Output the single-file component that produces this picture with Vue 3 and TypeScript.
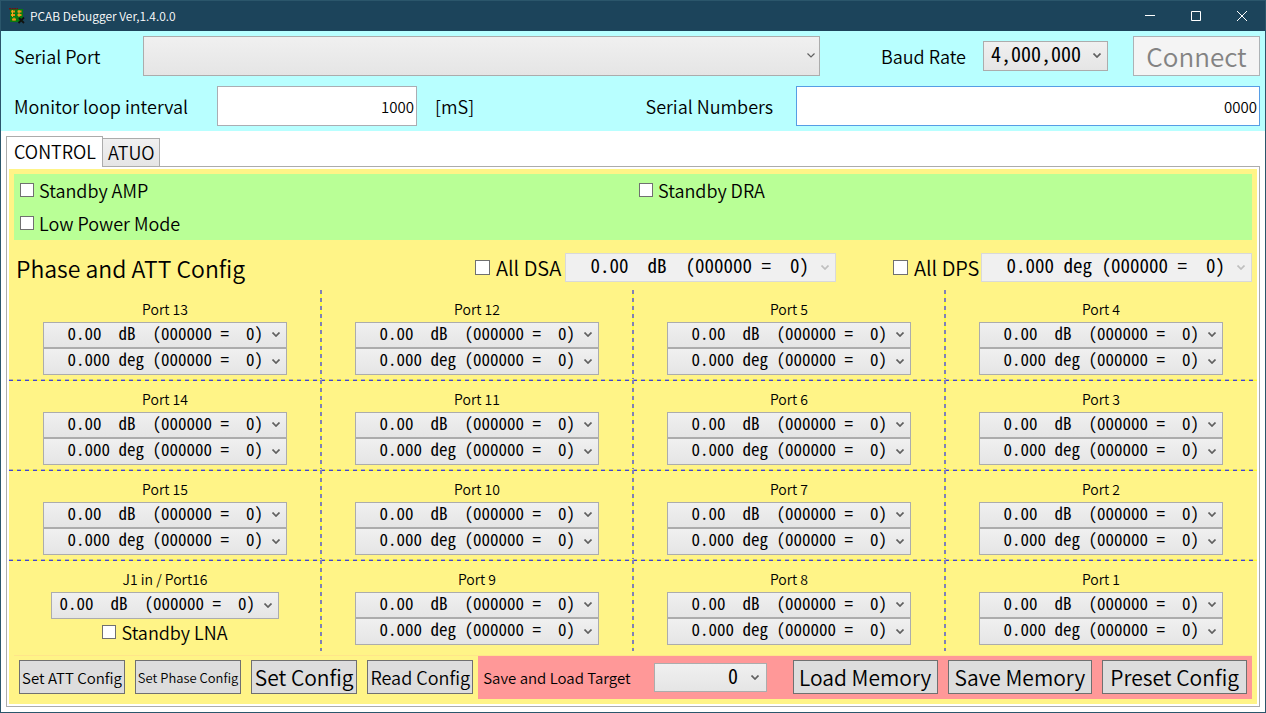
<script setup lang="ts">
import { computed, reactive, ref } from 'vue'

interface Port {
  name: string
  lna?: boolean
}

const nb = (s: string): string => s.replace(/ /g, '\u00a0')
const dsa = nb('0.00  dB  (000000 =  0)')
const dps = nb('0.000 deg (000000 =  0)')

const ports: Port[] = [
  { name: 'Port 13' }, { name: 'Port 12' }, { name: 'Port 5' }, { name: 'Port 4' },
  { name: 'Port 14' }, { name: 'Port 11' }, { name: 'Port 6' }, { name: 'Port 3' },
  { name: 'Port 15' }, { name: 'Port 10' }, { name: 'Port 7' }, { name: 'Port 2' },
  { name: 'J1 in / Port16', lna: true }, { name: 'Port 9' }, { name: 'Port 8' }, { name: 'Port 1' },
]

const interval = ref('1000')
const serials = ref('0000')
const serialPort = ref('')
const tab = ref<'control' | 'auto'>('control')
const all = reactive({ dsa: false, dps: false })
const canConnect = computed(() => serialPort.value !== '')
</script>

<template>
  <div class="window">
    <header class="titlebar">
      <svg class="logo" viewBox="0 0 16 16" aria-hidden="true">
        <rect x="1" y="1" width="13" height="13" fill="#087a10" />
        <path d="M0 .8h9" stroke="#6b1414" stroke-width="1.6" stroke-dasharray="2 .6" />
        <path d="M2 3.5h4M8.500 3.500h4M2 7h4M8.500 7h4M3 11.500h4" stroke="#f08a10" stroke-width="2.200" />
        <path d="M3.500 2v7M10 2v7M5 9.500v3" stroke="#e8b020" stroke-width="1" />
        <path d="M10 10l5 5M15 9.500L9.500 15" stroke="#101010" stroke-width="1.800" />
      </svg>
      <h1>PCAB Debugger Ver,1.4.0.0</h1>
      <div class="winbtns">
        <button type="button" aria-label="Minimize"><svg viewBox="0 0 10 10"><path d="M0 4.500h10" /></svg></button>
        <button type="button" aria-label="Maximize"><svg viewBox="0 0 10 10"><path d="M.5 .5h9v9h-9z" /></svg></button>
        <button type="button" aria-label="Close"><svg viewBox="0 0 10 10"><path d="M0 0l10 10M10 0L0 10" /></svg></button>
      </div>
    </header>

    <section class="connection">
      <div class="row first">
        <label for="port">Serial Port</label>
        <span class="combo tall grow">
          <select id="port" v-model="serialPort"><option value=""></option></select>
          <svg viewBox="0 0 8 5"><path d="M.5 .5L4 4L7.500 .5" /></svg>
        </span>
        <label for="baud" class="baud-label">Baud Rate</label>
        <span class="combo baud">
          <select id="baud"><option>4,000,000</option></select>
          <svg viewBox="0 0 8 5"><path d="M.5 .5L4 4L7.500 .5" /></svg>
        </span>
        <button type="button" class="connect" :disabled="!canConnect">Connect</button>
      </div>
      <div class="row second">
        <div class="half">
          <label for="interval">Monitor loop interval</label>
          <input id="interval" v-model="interval" class="interval" type="text" />
          <span>[mS]</span>
        </div>
        <div class="half">
          <label for="serials">Serial Numbers</label>
          <input id="serials" v-model="serials" class="serials" type="text" />
        </div>
      </div>
    </section>

    <main class="body">
      <nav class="tabs" role="tablist">
        <button type="button" role="tab" class="tab" :class="{ active: tab === 'control' }" @click="tab = 'control'">CONTROL</button>
        <button type="button" role="tab" class="tab" :class="{ active: tab === 'auto' }" @click="tab = 'auto'">ATUO</button>
      </nav>
      <div class="pane">
        <div class="content">
          <div class="modes">
            <label class="check"><input type="checkbox" />Standby AMP</label>
            <label class="check"><input type="checkbox" />Standby DRA</label>
            <label class="check"><input type="checkbox" />Low Power Mode</label>
          </div>

          <div class="config-head">
            <h2>Phase and ATT Config</h2>
            <div class="all">
              <label class="check big"><input v-model="all.dsa" type="checkbox" />All DSA</label>
              <span class="combo wide" :class="{ off: !all.dsa }">
                <select :disabled="!all.dsa" aria-label="All DSA value"><option>{{ dsa }}</option></select>
                <svg viewBox="0 0 8 5"><path d="M.5 .5L4 4L7.500 .5" /></svg>
              </span>
            </div>
            <div class="all">
              <label class="check big"><input v-model="all.dps" type="checkbox" />All DPS</label>
              <span class="combo wide" :class="{ off: !all.dps }">
                <select :disabled="!all.dps" aria-label="All DPS value"><option>{{ dps }}</option></select>
                <svg viewBox="0 0 8 5"><path d="M.5 .5L4 4L7.500 .5" /></svg>
              </span>
            </div>
          </div>

          <div class="ports">
            <div v-for="p in ports" :key="p.name" class="port">
              <h3>{{ p.name }}</h3>
              <span class="combo value" :class="{ narrow: p.lna }">
                <select :aria-label="p.name + ' attenuation'"><option>{{ dsa }}</option></select>
                <svg viewBox="0 0 8 5"><path d="M.5 .5L4 4L7.500 .5" /></svg>
              </span>
              <label v-if="p.lna" class="check"><input type="checkbox" />Standby LNA</label>
              <span v-else class="combo value">
                <select :aria-label="p.name + ' phase'"><option>{{ dps }}</option></select>
                <svg viewBox="0 0 8 5"><path d="M.5 .5L4 4L7.500 .5" /></svg>
              </span>
            </div>
          </div>

          <footer class="actions">
            <div class="set">
              <button type="button" class="s15">Set ATT Config</button>
              <button type="button" class="s13">Set Phase Config</button>
              <button type="button" class="s21">Set Config</button>
              <button type="button" class="s18">Read Config</button>
            </div>
            <div class="memory">
              <label for="target">Save and Load Target</label>
              <span class="combo target">
                <select id="target"><option>0</option></select>
                <svg viewBox="0 0 8 5"><path d="M.5 .5L4 4L7.500 .5" /></svg>
              </span>
              <button type="button" class="s21">Load Memory</button>
              <button type="button" class="s21">Save Memory</button>
              <button type="button" class="s21">Preset Config</button>
            </div>
          </footer>
        </div>
      </div>
    </main>
  </div>
</template>

<style>
body {
  margin: 0;
}
</style>

<style scoped>
.window,
.window * {
  box-sizing: border-box;
}
.window {
  display: flex;
  flex-direction: column;
  min-height: 100vh;
  border: 1px solid #2b566b;
  background: #fff;
  color: #000;
  font: 18px/24px "Noto Sans CJK JP", "Noto Sans", sans-serif;
  font-weight: 350;
}
h1,
h2,
h3 {
  margin: 0;
  font-weight: inherit;
}
button,
input,
select {
  margin: 0;
  font-family: inherit;
  font-weight: inherit;
  color: inherit;
}
label,
button,
h1,
h2,
h3 {
  white-space: nowrap;
}

.titlebar {
  display: flex;
  align-items: center;
  height: 30px;
  padding-left: 8px;
  background: #1c445b;
  color: #fff;
}
.logo {
  width: 16px;
  height: 16px;
}
.titlebar h1 {
  margin-left: 5px;
  font-size: 12px;
}
.winbtns {
  display: flex;
  margin-left: auto;
}
.winbtns button {
  width: 46px;
  height: 30px;
  padding: 0;
  border: 0;
  background: none;
}
.winbtns svg {
  display: block;
  width: 10px;
  height: 10px;
  margin: 0 auto;
  fill: none;
  stroke: #fff;
}

.connection {
  background: #b8ffff;
}
.row {
  display: flex;
  align-items: center;
  height: 50px;
  padding: 5px 5px 5px 13px;
}
.second {
  padding-left: 0;
}
.first > label:first-child {
  width: 129px;
}
.grow {
  flex: 1;
}
.baud-label {
  width: 163px;
  padding-left: 61px;
}
.half {
  display: flex;
  flex: 1;
  align-items: center;
}
.half:first-child {
  flex: 0 0 50%;
  padding-left: 13px;
}
.half label {
  width: 203px;
}
.half + .half {
  padding-left: 15px;
}
.half + .half label {
  width: 150px;
}
.half span {
  margin-left: 18px;
}
.half input {
  height: 40px;
  padding: 1px 2px 0;
  border: 1px solid #abadb3;
  background: #fff;
  font-size: 15px;
  text-align: right;
  outline: 0;
}
.interval {
  width: 200px;
}
.half .serials {
  flex: 1;
  min-width: 0;
  border-color: #569de5;
}
.connect {
  width: 127px;
  height: 40px;
  margin-left: 25px;
  padding: 0 0 2px;
  border: 1px solid #adb2b5;
  background: #f4f4f4;
  color: #838383;
  font-size: 26px;
}

.combo {
  position: relative;
  display: block;
  height: 27px;
  border: 1px solid #acacac;
  background: linear-gradient(#f0f0f0, #e5e5e5);
}
.combo select {
  display: block;
  width: 100%;
  height: 100%;
  margin-top: -3px;
  padding: 0 23px 0 5px;
  border: 0;
  background: none;
  appearance: none;
  font-family: "Noto Sans Mono CJK JP", "Liberation Mono", monospace;
  font-size: 17px;
  text-align: right;
  text-align-last: right;
  opacity: 1;
}
.combo svg {
  position: absolute;
  top: 50%;
  right: 6px;
  width: 8px;
  height: 5px;
  margin-top: -3px;
  fill: none;
  stroke: #606060;
  stroke-width: 1.7;
  pointer-events: none;
}
.combo.tall {
  height: 40px;
}
.combo.tall svg {
  right: 4px;
  stroke-width: 1.2;
}
.combo.baud {
  width: 125px;
  height: 30px;
}
.combo.baud select {
  padding-right: 26px;
  font-size: 20px;
}
.combo.wide {
  width: 271px;
  height: 29px;
}
.combo.wide select {
  padding-right: 26px;
  font-size: 19px;
}
.combo.off {
  border-color: #d9d9d9;
  background: #f0f0f0;
}
.combo.off select {
  color: #000;
}
.combo.off svg {
  stroke: #bfbfbf;
}

.body {
  display: flex;
  flex: 1;
  flex-direction: column;
  padding: 5px;
}
.tabs {
  display: flex;
  align-items: flex-end;
}
.tab {
  height: 28px;
  margin-bottom: 0;
  padding: 0 4px 2px 5px;
  border: 1px solid #acacac;
  border-bottom: 0;
  border-left: 0;
  background: linear-gradient(#f0f0f0, #e5e5e5);
  font-size: 18px;
  line-height: 24px;
}
.tab.active {
  z-index: 1;
  height: 31px;
  margin-bottom: -1px;
  padding: 0 6px 2px 7px;
  border-left: 1px solid #acacac;
  background: #fff;
}
.pane {
  display: flex;
  flex: 1;
  padding: 2px;
  border: 1px solid #acacac;
}
.content {
  display: flex;
  flex: 1;
  flex-direction: column;
  padding: 5px 0;
  background: #fff487;
}
.modes {
  display: grid;
  grid-template-columns: 1fr 1fr;
  grid-auto-rows: 33px;
  margin: 0 5px;
  background: #b9ff96;
}
.check {
  display: flex;
  align-items: center;
}
.modes .check {
  padding: 0 0 2px 6px;
}
.check input {
  width: 14px;
  height: 14px;
  margin-right: 5px;
  border: 1px solid #707070;
  background: #fff;
  appearance: none;
}
.check input:checked {
  background: #404040;
}
.check.big {
  font-size: 20px;
}
.check.big input {
  width: 15px;
  height: 15px;
  margin-right: 6px;
}
.config-head {
  display: flex;
  align-items: center;
  height: 50px;
  padding: 5px 5px 0 7px;
}
.config-head h2 {
  flex: 1;
  font-size: 23px;
}
.all {
  display: flex;
  align-items: center;
}
.all .check {
  width: 90px;
}
.all + .all {
  margin-left: 57px;
}
.all + .all .check {
  width: 88px;
}

.ports {
  display: grid;
  flex: 1;
  grid-template-columns: repeat(4, 1fr);
  grid-template-rows: repeat(3, 90px) 1fr;
}
.port {
  position: relative;
  display: flex;
  flex-direction: column;
  align-items: center;
  padding-top: 7px;
}
.port::before,
.port::after {
  position: absolute;
  content: "";
  pointer-events: none;
}
.port::before {
  top: 0;
  right: -1px;
  bottom: 0;
  width: 2px;
  background: repeating-linear-gradient(to bottom, #8080b8 0 4px, #ffff40 4px 8px);
}
.port::after {
  right: 0;
  bottom: -1px;
  left: 0;
  height: 2px;
  background:
    repeating-linear-gradient(to right, #b8b4a8 0 4px, #fff860 4px 8px) top / 100% 1px no-repeat,
    repeating-linear-gradient(to right, #4040d8 0 4px, #ffff20 4px 8px) bottom / 100% 1px no-repeat;
}
.port:nth-child(4n)::before,
.port:nth-child(n + 13)::after {
  display: none;
}
.port h3 {
  font-size: 14px;
  line-height: 25px;
}
.combo.value {
  width: 244px;
  height: 26px;
}
.combo.value + .combo.value,
.combo.value.narrow {
  height: 27px;
}
.combo.value.narrow {
  width: 228px;
}
.port .check {
  margin-top: 1px;
}

.actions {
  display: flex;
  height: 44px;
  margin: 4px 5px 0;
  border-top: 1px solid #ffe58a;
}
.set {
  display: grid;
  flex: 3;
  grid-template-columns: repeat(4, 1fr);
}
.memory {
  display: grid;
  flex: 5;
  grid-template-columns: repeat(5, 1fr);
  align-items: center;
  background: #ff9898;
}
.memory label {
  padding-left: 5px;
  font-size: 15px;
}
.actions button {
  height: 34px;
  margin: 4px 5px 5px;
  padding: 0;
  border: 1px solid #707070;
  background: #ddd;
}
.s13 {
  font-size: 13px;
}
.s15 {
  font-size: 15px;
}
.s18 {
  font-size: 18px;
}
.s21 {
  font-size: 21px;
}
.combo.target {
  width: 113px;
  height: 29px;
  justify-self: center;
}
.combo.target select {
  padding-right: 28px;
  font-size: 20px;
}
.combo.target svg {
  right: 7px;
}
</style>
